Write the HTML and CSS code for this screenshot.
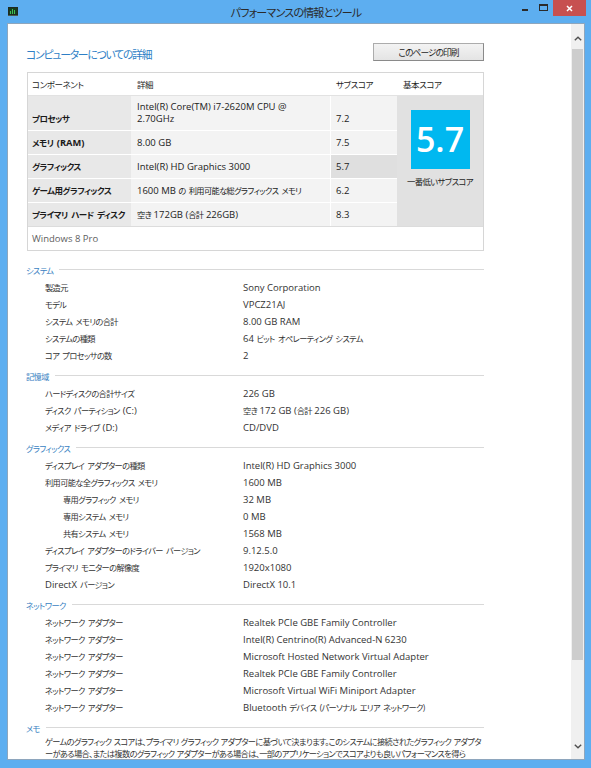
FILE: index.html
```html
<!DOCTYPE html>
<html lang="ja">
<head>
<meta charset="utf-8">
<title>パフォーマンスの情報とツール</title>
<link rel="stylesheet" href="styles.css">
</head>
<body>
<div class="window">
  <div class="titlebar">
    <svg class="app-icon" width="10" height="9" viewBox="0 0 10 9">
      <rect x="0" y="0" width="10" height="9" fill="#1f2a22"/>
      <rect x="1" y="1" width="8" height="6" fill="#163d1f"/>
      <rect x="2" y="4" width="1" height="3" fill="#3fbf55"/>
      <rect x="4" y="2" width="1" height="5" fill="#3fbf55"/>
      <rect x="6" y="3" width="1" height="4" fill="#3fbf55"/>
      <rect x="0" y="8" width="10" height="1" fill="#4a5a4e"/>
    </svg>
    <div class="title">パフォーマンスの情報とツール</div>
    <div class="controls">
      <div class="ctl"><svg width="8" height="8" viewBox="0 0 8 8"><rect x="1" y="5" width="6" height="2" fill="#2b2b2b"/></svg></div>
      <div class="ctl"><svg width="9" height="8" viewBox="0 0 9 8"><rect x="0.5" y="0.5" width="8" height="6" fill="none" stroke="#2b2b2b"/><rect x="0" y="0" width="9" height="2" fill="#2b2b2b"/></svg></div>
      <div class="ctl close"><svg width="7" height="7" viewBox="0 0 7 7"><path d="M1 1 L6 6 M6 1 L1 6" stroke="#fff" stroke-width="1.5"/></svg></div>
    </div>
  </div>
  <div class="client">
    <div class="content">
      <div class="page">
        <div class="top-row">
          <h1 class="page-title">コンピューターについての詳細</h1>
          <button class="print-btn">このページの印刷</button>
        </div>

        <div class="score-table">
          <div class="st-head">
            <div class="h-label">コンポーネント</div>
            <div class="h-cell">詳細</div>
            <div class="h-cell">サブスコア</div>
            <div class="h-cell">基本スコア</div>
          </div>
          <div class="st-body">
            <div class="cell c-label"><span>プロセッサ</span></div>
            <div class="cell c-detail"><span>Intel(R) Core(TM) i7-2620M CPU @<br>2.70GHz</span></div>
            <div class="cell c-sub"><span>7.2</span></div>
            <div class="c-base">
              <div class="base-box">5.7</div>
              <div class="base-caption">一番低いサブスコア</div>
            </div>

            <div class="cell c-label"><span>メモリ <span class="en-b">(RAM)</span></span></div>
            <div class="cell c-detail"><span>8.00 GB</span></div>
            <div class="cell c-sub"><span>7.5</span></div>

            <div class="cell c-label"><span>グラフィックス</span></div>
            <div class="cell c-detail"><span>Intel(R) HD Graphics 3000</span></div>
            <div class="cell c-sub c-lowest"><span>5.7</span></div>

            <div class="cell c-label"><span>ゲーム用グラフィックス</span></div>
            <div class="cell c-detail"><span>1600 MB <span class="ja">の 利用可能な総グラフィックス メモリ</span></span></div>
            <div class="cell c-sub"><span>6.2</span></div>

            <div class="cell c-label"><span>プライマリ ハード ディスク</span></div>
            <div class="cell c-detail"><span><span class="ja">空き</span> 172GB (<span class="ja">合計</span> 226GB)</span></div>
            <div class="cell c-sub"><span>8.3</span></div>
          </div>
          <div class="st-foot">Windows 8 Pro</div>
        </div>

        <section class="info first">
          <div class="info-head"><span>システム</span></div>
          <div class="rows">
            <div class="k">製造元</div><div class="v">Sony Corporation</div>
            <div class="k">モデル</div><div class="v">VPCZ21AJ</div>
            <div class="k">システム メモリの合計</div><div class="v">8.00 GB RAM</div>
            <div class="k">システムの種類</div><div class="v">64 <span class="ja">ビット オペレーティング システム</span></div>
            <div class="k">コア プロセッサの数</div><div class="v">2</div>
          </div>
        </section>

        <section class="info">
          <div class="info-head"><span>記憶域</span></div>
          <div class="rows">
            <div class="k">ハードディスクの合計サイズ</div><div class="v">226 GB</div>
            <div class="k">ディスク パーティション <span class="en">(C:)</span></div><div class="v"><span class="ja">空き</span> 172 GB (<span class="ja">合計</span> 226 GB)</div>
            <div class="k">メディア ドライブ <span class="en">(D:)</span></div><div class="v">CD/DVD</div>
          </div>
        </section>

        <section class="info">
          <div class="info-head"><span>グラフィックス</span></div>
          <div class="rows">
            <div class="k">ディスプレイ アダプターの種類</div><div class="v">Intel(R) HD Graphics 3000</div>
            <div class="k">利用可能な全グラフィックス メモリ</div><div class="v">1600 MB</div>
            <div class="k sub">専用グラフィック メモリ</div><div class="v">32 MB</div>
            <div class="k sub">専用システム メモリ</div><div class="v">0 MB</div>
            <div class="k sub">共有システム メモリ</div><div class="v">1568 MB</div>
            <div class="k">ディスプレイ アダプターのドライバー バージョン</div><div class="v">9.12.5.0</div>
            <div class="k">プライマリ モニターの解像度</div><div class="v">1920x1080</div>
            <div class="k"><span class="en">DirectX</span> バージョン</div><div class="v">DirectX 10.1</div>
          </div>
        </section>

        <section class="info">
          <div class="info-head"><span>ネットワーク</span></div>
          <div class="rows">
            <div class="k">ネットワーク アダプター</div><div class="v">Realtek PCIe GBE Family Controller</div>
            <div class="k">ネットワーク アダプター</div><div class="v">Intel(R) Centrino(R) Advanced-N 6230</div>
            <div class="k">ネットワーク アダプター</div><div class="v">Microsoft Hosted Network Virtual Adapter</div>
            <div class="k">ネットワーク アダプター</div><div class="v">Realtek PCIe GBE Family Controller</div>
            <div class="k">ネットワーク アダプター</div><div class="v">Microsoft Virtual WiFi Miniport Adapter</div>
            <div class="k">ネットワーク アダプター</div><div class="v">Bluetooth <span class="ja">デバイス (パーソナル エリア ネットワーク)</span></div>
          </div>
        </section>

        <section class="info">
          <div class="info-head"><span>メモ</span></div>
          <div class="memo">
            <span class="memo-line">ゲームのグラフィック スコアは、プライマリ グラフィック アダプターに基づいて決まります。このシステムに接続されたグラフィック アダプタ</span>
            <span class="memo-line">ーがある場合、または複数のグラフィック アダプターがある場合は、一部のアプリケーションでスコアよりも良いパフォーマンスを得ら</span>
          </div>
        </section>
      </div>
    </div>
    <div class="scrollbar">
      <div class="sb-btn up"><svg width="8" height="5" viewBox="0 0 8 5"><path d="M0.8 4.2 L4 1.2 L7.2 4.2" fill="none" stroke="#505050" stroke-width="1.4"/></svg></div>
      <div class="sb-track"><div class="sb-thumb"></div></div>
      <div class="sb-btn down"><svg width="8" height="5" viewBox="0 0 8 5"><path d="M0.8 0.8 L4 3.8 L7.2 0.8" fill="none" stroke="#505050" stroke-width="1.4"/></svg></div>
    </div>
  </div>
</div>
</body>
</html>
```

FILE: styles.css
```css
* {
  box-sizing: border-box;
  margin: 0;
  padding: 0;
}

html,
body {
  width: 591px;
  height: 768px;
  overflow: hidden;
}

/* default settings are tuned for Japanese runs */
body {
  font-family: "Open Sans", "Noto Sans CJK JP", sans-serif;
  font-size: 8.2px;
  letter-spacing: -0.6px;
  word-spacing: 1.6px;
  color: #333333;
  font-feature-settings: "palt";
  background: #5daef0;
}

/* Latin runs */
.en,
.v,
.c-detail,
.c-sub,
.st-foot {
  font-size: 9.5px;
  letter-spacing: 0;
  word-spacing: 0;
}

.en-b {
  font-size: 9.3px;
  letter-spacing: 0;
  word-spacing: 0;
}

/* Japanese runs inside Latin text */
.ja {
  font-size: 8.2px;
  letter-spacing: -0.6px;
  word-spacing: 1.6px;
}

.window {
  width: 591px;
  height: 768px;
  background: #5daef0;
  display: flex;
  flex-direction: column;
  padding: 0 6px 8px 7px;
}

/* title bar */
.titlebar {
  height: 23px;
  flex: none;
  display: grid;
  grid-template-columns: 1fr auto 1fr;
  align-items: start;
}

.app-icon {
  margin: 7px 0 0 1px;
  display: block;
}

.title {
  font-family: "Noto Sans CJK JP", sans-serif;
  font-size: 11px;
  letter-spacing: -0.8px;
  line-height: 13px;
  margin-top: 6px;
  color: #2a2a2a;
}

.controls {
  justify-self: end;
  display: flex;
  margin-right: -1px;
}

.ctl {
  width: 19px;
  height: 16px;
  display: flex;
  align-items: center;
  justify-content: center;
}

.ctl svg {
  display: block;
}

.ctl.close {
  width: 33px;
  background: #c75050;
}

/* client area */
.client {
  flex: 1;
  display: flex;
  border: 1px solid #8ea6bd;
  background: #ffffff;
  min-height: 0;
}

.content {
  flex: 1;
  overflow: hidden;
  padding: 19px 0 0 18px;
}

.page {
  width: 458px;
}

.top-row {
  height: 18px;
  display: flex;
  align-items: center;
  justify-content: space-between;
}

.page-title {
  font-family: "Noto Sans CJK JP", sans-serif;
  font-weight: normal;
  font-size: 10.8px;
  letter-spacing: -1.2px;
  line-height: 14px;
  color: #2f7fc6;
  margin-top: 4px;
}

.print-btn {
  width: 111px;
  height: 18px;
  font-family: "Noto Sans CJK JP", sans-serif;
  font-size: 8.7px;
  letter-spacing: -0.9px;
  color: #1e1e1e;
  border: 1px solid #acacac;
  border-right-color: #8a8a8a;
  border-bottom-color: #8a8a8a;
  background: linear-gradient(#f3f3f3, #e4e4e4);
  font-feature-settings: "palt";
}

/* score table */
.score-table {
  margin: 11px 0 0 1px;
  width: 457px;
  border: 1px solid #d6d6d6;
}

.st-head {
  display: grid;
  grid-template-columns: 103px 199px 67px 86px;
  height: 23px;
  border-bottom: 1px solid #e2e2e2;
  align-items: center;
  color: #1e1e1e;
  font-size: 8.5px;
  letter-spacing: -0.4px;
}

.h-label {
  padding-left: 4px;
}

.h-cell {
  padding-left: 6px;
}

.st-body {
  display: grid;
  grid-template-columns: 103px 199px 67px 86px;
  grid-template-rows: 34px 23px 23px 23px 23px;
  row-gap: 1px;
  background: #ffffff;
}

.cell {
  display: flex;
  align-items: flex-end;
  padding-bottom: 5px;
  line-height: 12px;
  white-space: nowrap;
}

.c-label {
  background: #e8e8e8;
  padding-left: 4px;
  font-weight: bold;
  font-size: 8.5px;
  letter-spacing: -0.5px;
  color: #1a1a1a;
}

.c-detail {
  background: #f3f3f3;
  padding-left: 6px;
  color: #222222;
}

.c-sub {
  background: #f3f3f3;
  border-left: 1px solid #ffffff;
  padding-left: 5px;
  color: #222222;
}

.c-sub.c-lowest {
  background: #dfdfdf;
}

.c-base {
  grid-column: 4;
  grid-row: 1 / span 5;
  background: #e1e1e1;
  display: flex;
  flex-direction: column;
  align-items: center;
  padding-top: 14px;
}

.base-box {
  width: 59px;
  height: 59px;
  background: #00b8f0;
  color: #ffffff;
  font-family: "Open Sans", sans-serif;
  font-size: 34px;
  letter-spacing: 0;
  font-weight: 600;
  display: flex;
  align-items: center;
  justify-content: center;
  line-height: 1;
  padding-bottom: 1px;
}

.base-caption {
  margin-top: 7px;
  line-height: 12px;
  color: #1e1e1e;
  font-size: 8.4px;
}

.st-foot {
  border-top: 1px solid #dcdcdc;
  height: 24px;
  display: flex;
  align-items: center;
  padding-left: 4px;
  color: #606060;
}

/* info sections */
.info {
  margin-top: 3px;
}

.info.first {
  margin-top: 10px;
}

.info-head {
  display: flex;
  align-items: center;
  gap: 6px;
  height: 17px;
  color: #3a7fc2;
}

.info-head::after {
  content: "";
  flex: 1;
  height: 1px;
  background: #d9d9d9;
}

.rows {
  display: grid;
  grid-template-columns: 198px 1fr;
  align-items: baseline;
  padding: 1px 0 0 19px;
  line-height: 17px;
  white-space: nowrap;
}

.k.sub {
  padding-left: 18px;
}

.memo {
  padding: 0 0 0 19px;
  line-height: 12px;
}

.memo-line {
  display: block;
  white-space: nowrap;
  word-spacing: 0.6px;
}

/* scrollbar */
.scrollbar {
  width: 13px;
  flex: none;
  background: #f0f0f0;
  display: flex;
  flex-direction: column;
}

.sb-btn {
  display: flex;
  align-items: center;
  justify-content: center;
}

.sb-btn.up {
  height: 25px;
  padding-top: 4px;
}

.sb-btn.down {
  height: 28px;
  padding-top: 2px;
}

.sb-track {
  flex: 1;
  padding: 0 1px;
}

.sb-thumb {
  height: 611px;
  background: #cdcdcd;
}
```
